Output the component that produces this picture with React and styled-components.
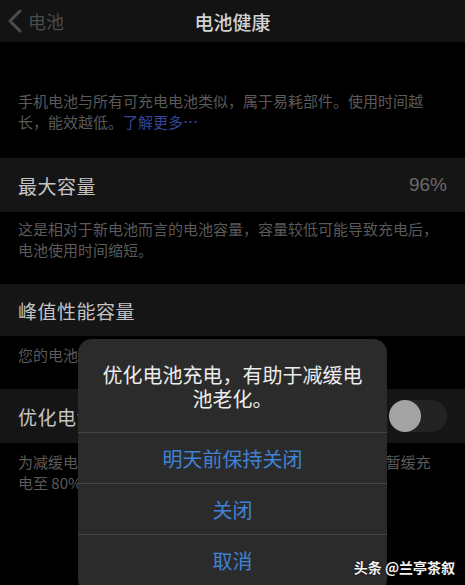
import React from "react";
import styled, { createGlobalStyle } from "styled-components";

const GlobalStyle = createGlobalStyle`
  html, body {
    margin: 0;
    padding: 0;
    background: #000;
  }
  body {
    font-family: "Noto Sans CJK SC", "Noto Sans", sans-serif;
    overflow: hidden;
  }
`;

const Screen = styled.div`
  position: relative;
  width: 465px;
  height: 585px;
  overflow: hidden;
  background: #000;
  display: flex;
  flex-direction: column;
`;

const NavBar = styled.div`
  height: 42px;
  flex-shrink: 0;
  background: #131313;
  display: grid;
  grid-template-columns: 1fr auto 1fr;
  align-items: center;
`;

const BackBtn = styled.div`
  display: flex;
  align-items: center;
  gap: 6px;
  padding-left: 8px;
  color: #4b4b4b;
  font-size: 18px;
`;

const NavTitle = styled.div`
  color: #d2d2d2;
  font-size: 19px;
  font-weight: 500;
`;

const Note = styled.p`
  margin: 0;
  padding: ${(p) => p.$pad || "7px 18px 24px"};
  color: #5a5a5a;
  font-size: 15px;
  line-height: 21px;
  white-space: nowrap;
`;

const Link = styled.span`
  color: #34459a;
`;

const Row = styled.div`
  height: ${(p) => p.$h || 53}px;
  flex-shrink: 0;
  background: #151515;
  display: flex;
  align-items: center;
  justify-content: space-between;
  padding: 0 18px;
`;

const Label = styled.span`
  color: #c4c4c4;
  font-size: 19px;
  letter-spacing: 0.5px;
`;

const Value = styled.span`
  color: #6a6a6a;
  font-size: 19px;
  font-family: "Liberation Sans", "Noto Sans", sans-serif;
`;

const Track = styled.div`
  width: 58px;
  height: 32px;
  border-radius: 16px;
  background: #232323;
  display: flex;
  align-items: center;
`;

const Knob = styled.div`
  width: 32px;
  height: 32px;
  border-radius: 50%;
  background: #a3a3a3;
`;

const Sheet = styled.div`
  position: absolute;
  left: 78px;
  top: 339px;
  width: 309px;
  height: 254px;
  border-radius: 14px;
  background: #2b2b2b;
  display: flex;
  flex-direction: column;
  overflow: hidden;
`;

const SheetTitle = styled.div`
  height: 94px;
  flex-shrink: 0;
  box-sizing: border-box;
  padding: 24px 8px 0;
  text-align: center;
  color: #ededed;
  font-size: 20px;
  line-height: 24px;
  white-space: nowrap;
  border-bottom: 1px solid #444;
`;

const SheetButton = styled.div`
  height: 50px;
  flex-shrink: 0;
  display: flex;
  align-items: center;
  justify-content: center;
  color: #3f82d6;
  font-size: 20px;
  border-bottom: ${(p) => (p.$last ? "none" : "1px solid #444")};
`;

const Watermark = styled.div`
  position: absolute;
  right: 10px;
  bottom: 8px;
  color: #f2f2f2;
  font-size: 14px;
  font-weight: 700;
  text-shadow: 0 0 2px #000;
`;

export default function App() {
  return (
    <>
      <GlobalStyle />
      <Screen>
        <NavBar>
          <BackBtn>
            <svg width="14" height="24" viewBox="0 0 14 24">
              <polyline
                points="12,2 2,12 12,22"
                fill="none"
                stroke="#4b4b4b"
                strokeWidth="3"
                strokeLinecap="round"
                strokeLinejoin="round"
              />
            </svg>
            电池
          </BackBtn>
          <NavTitle>电池健康</NavTitle>
          <div />
        </NavBar>

        <Note $pad="48px 18px 26px">
          手机电池与所有可充电电池类似，属于易耗部件。使用时间越
          <br />
          长，能效越低。<Link>了解更多…</Link>
        </Note>

        <Row $h={54}>
          <Label>最大容量</Label>
          <Value>96%</Value>
        </Row>
        <Note $pad="6px 18px 24px">
          这是相对于新电池而言的电池容量，容量较低可能导致充电后，
          <br />
          电池使用时间缩短。
        </Note>

        <Row $h={52}>
          <Label>峰值性能容量</Label>
        </Row>
        <Note $pad="8px 18px 24px">您的电池目前支持正常峰值性能。</Note>

        <Row $h={54}>
          <Label>优化电池充电</Label>
          <Track>
            <Knob />
          </Track>
        </Row>
        <Note $pad="8px 18px 24px">
          为减缓电池老化，iPhone 会学习您的日常充电情况，以暂缓充
          <br />
          电至 80% 以上，直到您需要使用的时候。
        </Note>

        <Sheet>
          <SheetTitle>
            优化电池充电，有助于减缓电
            <br />
            池老化。
          </SheetTitle>
          <SheetButton>明天前保持关闭</SheetButton>
          <SheetButton>关闭</SheetButton>
          <SheetButton $last>取消</SheetButton>
        </Sheet>

        <Watermark>头条 @兰亭茶叙</Watermark>
      </Screen>
    </>
  );
}
